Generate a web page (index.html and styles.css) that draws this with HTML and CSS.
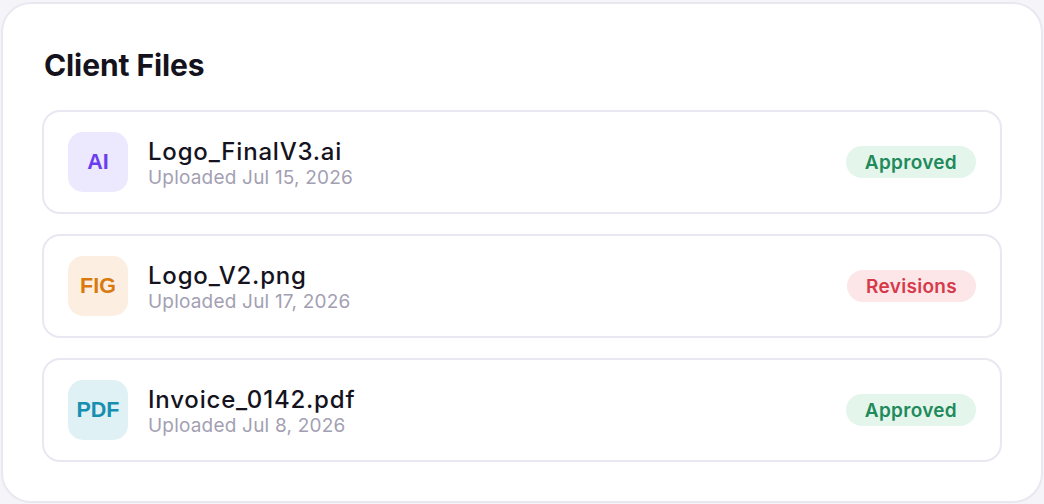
FILE: index.html
```html
<!DOCTYPE html>
<html lang="en">
<head>
<meta charset="utf-8">
<title>Client Files</title>
<link rel="stylesheet" href="styles.css">
</head>
<body>
<section class="card">
  <h1 class="title">Client Files</h1>
  <ul class="files">
    <li class="file">
      <div class="badge-icon ai">AI</div>
      <div class="meta">
        <div class="name">Logo_FinalV3.ai</div>
        <div class="date">Uploaded Jul 15, 2026</div>
      </div>
      <span class="status approved">Approved</span>
    </li>
    <li class="file">
      <div class="badge-icon fig">FIG</div>
      <div class="meta">
        <div class="name">Logo_V2.png</div>
        <div class="date">Uploaded Jul 17, 2026</div>
      </div>
      <span class="status revisions">Revisions</span>
    </li>
    <li class="file">
      <div class="badge-icon pdf">PDF</div>
      <div class="meta">
        <div class="name">Invoice_0142.pdf</div>
        <div class="date">Uploaded Jul 8, 2026</div>
      </div>
      <span class="status approved">Approved</span>
    </li>
  </ul>
</section>
</body>
</html>
```

FILE: styles.css
```css
* { box-sizing: border-box; }
html, body { margin: 0; padding: 0; }
body {
  background: #f5f5f9;
  font-family: "Inter", "Noto Sans", sans-serif;
  width: 1044px;
  height: 504px;
  padding: 2px 1px 1px 1px;
}
.card {
  background: #ffffff;
  border: 2px solid #e9e8f1;
  border-radius: 30px;
  height: 501px;
  padding: 40px 39px 0 39px;
}
.title {
  margin: 0;
  padding: 2px 0 0 2px;
  font-size: 30px;
  font-weight: 700;
  letter-spacing: -0.1px;
  color: #14121c;
  line-height: 38px;
  height: 66px;
}
.files {
  list-style: none;
  margin: 0;
  padding: 0;
  display: flex;
  flex-direction: column;
  gap: 20px;
}
.file {
  display: flex;
  align-items: center;
  height: 104px;
  border: 2px solid #e9e8f1;
  border-radius: 18px;
  padding: 0 24px;
}
.badge-icon {
  width: 60px;
  height: 60px;
  border-radius: 15px;
  display: flex;
  align-items: center;
  justify-content: center;
  font-family: "Liberation Sans", Arial, sans-serif;
  font-weight: 700;
  font-size: 21.5px;
  flex-shrink: 0;
}
.ai { background: #ece8fd; color: #6a3df1; }
.fig { background: #fcefe1; color: #d9790f; }
.pdf { background: #e0f1f6; color: #178fb1; }
.meta {
  margin-left: 20px;
  padding-top: 4px;
  flex: 1;
  display: flex;
  flex-direction: column;
}
.name {
  font-size: 24px;
  font-weight: 500;
  color: #15131d;
  line-height: 28px;
  letter-spacing: 0.8px;
}
.date {
  font-size: 19px;
  font-weight: 400;
  color: #a3a0b3;
  line-height: 24px;
  letter-spacing: 0.2px;
}
.status {
  height: 32px;
  border-radius: 16px;
  padding: 0 19px;
  display: flex;
  align-items: center;
  font-size: 19px;
  font-weight: 600;
  letter-spacing: 0.3px;
}
.approved { background: #e4f5ec; color: #1f8a5a; }
.revisions { background: #fce6e8; color: #d63a4a; }
```
